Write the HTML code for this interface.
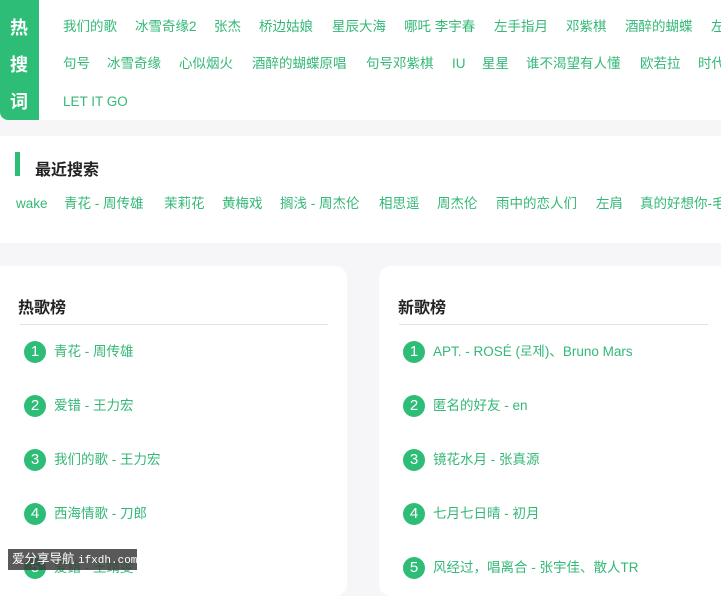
<!DOCTYPE html>
<html><head><meta charset="utf-8"><style>
*{margin:0;padding:0;box-sizing:border-box}
body{width:721px;height:580px;overflow:hidden;background:#f6f6f8;font-family:"Liberation Sans","Noto Sans CJK SC",sans-serif;position:relative}
.top{position:absolute;left:0;top:0;width:721px;height:120px;background:#fff}
.side{position:absolute;left:0;top:0;width:39px;height:120px;background:#2ebd76;border-radius:0 0 0 8px;color:#fff;font-weight:bold;font-size:18px}
.side span{position:absolute;left:10px}
.w{position:absolute;font-size:13.5px;white-space:nowrap;color:#34b877;line-height:16px;margin-top:1px}
.recent{position:absolute;left:0;top:136px;width:721px;height:107px;background:#fff}
.bar{position:absolute;left:15px;top:152px;width:5px;height:24px;background:#2ebd76}
.h{position:absolute;font-size:16px;font-weight:bold;color:#222;white-space:nowrap;margin-top:1px}
.card{position:absolute;top:266px;height:330px;background:#fff;border-radius:12px}
.line{position:absolute;height:1px;background:#e2e2e6;top:324px}
.c{position:absolute;width:22px;height:22px;border-radius:50%;background:#2ebd76;color:#fff;font-size:15px;text-align:center;line-height:22px}
.wm{position:absolute;left:8px;top:549px;width:129px;height:21px;background:rgba(60,60,60,.85);color:#fff;font-size:12.5px;line-height:21px;padding-left:4px;white-space:nowrap;overflow:hidden}
.wm i{font-style:normal;font-family:"Liberation Mono",monospace;font-size:11px}
</style></head><body>
<div class="top"></div>
<div class="side"><span style="top:14px">热</span><span style="top:51px">搜</span><span style="top:88px">词</span></div>
<div class="w" style="left:63px;top:18px">我们的歌</div>
<div class="w" style="left:135px;top:18px">冰雪奇缘2</div>
<div class="w" style="left:214px;top:18px">张杰</div>
<div class="w" style="left:259px;top:18px">桥边姑娘</div>
<div class="w" style="left:332px;top:18px">星辰大海</div>
<div class="w" style="left:404px;top:18px">哪吒 李宇春</div>
<div class="w" style="left:494px;top:18px">左手指月</div>
<div class="w" style="left:566px;top:18px">邓紫棋</div>
<div class="w" style="left:625px;top:18px">酒醉的蝴蝶</div>
<div class="w" style="left:711px;top:18px">左</div>
<div class="w" style="left:63px;top:55px">句号</div>
<div class="w" style="left:107px;top:55px">冰雪奇缘</div>
<div class="w" style="left:179px;top:55px">心似烟火</div>
<div class="w" style="left:252px;top:55px">酒醉的蝴蝶原唱</div>
<div class="w" style="left:366px;top:55px">句号邓紫棋</div>
<div class="w" style="left:452px;top:55px">IU</div>
<div class="w" style="left:482px;top:55px">星星</div>
<div class="w" style="left:526px;top:55px">谁不渴望有人懂</div>
<div class="w" style="left:640px;top:55px">欧若拉</div>
<div class="w" style="left:698px;top:55px">时代</div>
<div class="w" style="left:63px;top:93px">LET IT GO</div>

<div class="recent"></div>
<div class="bar"></div>
<div class="h" style="left:35px;top:155px">最近搜索</div>
<div class="w" style="left:16px;top:195px">wake</div>
<div class="w" style="left:64px;top:195px">青花 - 周传雄</div>
<div class="w" style="left:164px;top:195px">茉莉花</div>
<div class="w" style="left:222px;top:195px">黄梅戏</div>
<div class="w" style="left:280px;top:195px">搁浅 - 周杰伦</div>
<div class="w" style="left:379px;top:195px">相思遥</div>
<div class="w" style="left:437px;top:195px">周杰伦</div>
<div class="w" style="left:496px;top:195px">雨中的恋人们</div>
<div class="w" style="left:596px;top:195px">左肩</div>
<div class="w" style="left:640px;top:195px">真的好想你-毛</div>

<div class="card" style="left:-12px;width:359px"></div>
<div class="card" style="left:379px;width:360px"></div>
<div class="h" style="left:18px;top:293px">热歌榜</div>
<div class="h" style="left:398px;top:293px">新歌榜</div>
<div class="line" style="left:20px;width:308px"></div>
<div class="line" style="left:399px;width:309px"></div>

<div class="c" style="left:24px;top:341px">1</div><div class="w" style="left:54px;top:343px">青花 - 周传雄</div>
<div class="c" style="left:24px;top:395px">2</div><div class="w" style="left:54px;top:397px">爱错 - 王力宏</div>
<div class="c" style="left:24px;top:449px">3</div><div class="w" style="left:54px;top:451px">我们的歌 - 王力宏</div>
<div class="c" style="left:24px;top:503px">4</div><div class="w" style="left:54px;top:505px">西海情歌 - 刀郎</div>
<div class="c" style="left:24px;top:557px">5</div><div class="w" style="left:54px;top:559px">爱錯 - 王靖雯</div>

<div class="c" style="left:403px;top:341px">1</div><div class="w" style="left:433px;top:343px">APT. - ROSÉ (로제)、Bruno Mars</div>
<div class="c" style="left:403px;top:395px">2</div><div class="w" style="left:433px;top:397px">匿名的好友 - en</div>
<div class="c" style="left:403px;top:449px">3</div><div class="w" style="left:433px;top:451px">镜花水月 - 张真源</div>
<div class="c" style="left:403px;top:503px">4</div><div class="w" style="left:433px;top:505px">七月七日晴 - 初月</div>
<div class="c" style="left:403px;top:557px">5</div><div class="w" style="left:433px;top:559px">风经过，唱离合 - 张宇佳、散人TR</div>

<div class="wm">爱分享导航 <i>ifxdh.com</i></div>
</body></html>
